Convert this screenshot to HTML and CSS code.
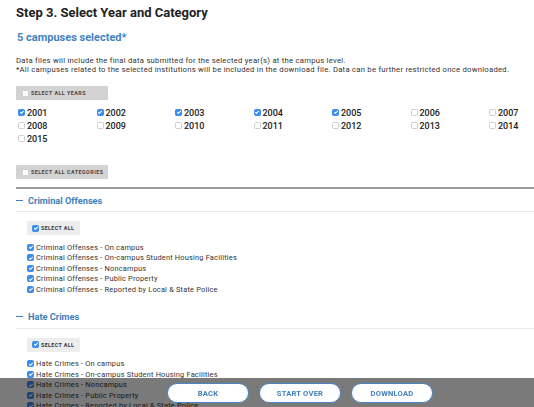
FILE: index.html
```html
<!DOCTYPE html>
<html>
<head>
<meta charset="utf-8">
<link rel="stylesheet" href="styles.css">
</head>
<body>
<div class="page">
  <h1 class="title">Step 3. Select Year and Category</h1>
  <h2 class="count">5 campuses selected*</h2>
  <p class="note">Data files will include the final data submitted for the selected year(s) at the campus level.<br>*All campuses related to the selected institutions will be included in the download file. Data can be further restricted once downloaded.</p>

  <div class="toggle-all"><span class="cb"></span><span>SELECT ALL YEARS</span></div>

  <div class="years">
    <label class="year"><span class="cb on"></span>2001</label>
    <label class="year"><span class="cb on"></span>2002</label>
    <label class="year"><span class="cb on"></span>2003</label>
    <label class="year"><span class="cb on"></span>2004</label>
    <label class="year"><span class="cb on"></span>2005</label>
    <label class="year"><span class="cb"></span>2006</label>
    <label class="year"><span class="cb"></span>2007</label>
    <label class="year"><span class="cb"></span>2008</label>
    <label class="year"><span class="cb"></span>2009</label>
    <label class="year"><span class="cb"></span>2010</label>
    <label class="year"><span class="cb"></span>2011</label>
    <label class="year"><span class="cb"></span>2012</label>
    <label class="year"><span class="cb"></span>2013</label>
    <label class="year"><span class="cb"></span>2014</label>
    <label class="year"><span class="cb"></span>2015</label>
  </div>

  <div class="toggle-all toggle-cats"><span class="cb"></span><span>SELECT ALL CATEGORIES</span></div>

  <div class="categories">
    <section class="cat">
      <div class="cat-head"><span class="dash"></span>Criminal Offenses</div>
      <div class="cat-body">
        <div class="sel-all"><span class="cb on"></span><span>SELECT ALL</span></div>
        <ul class="items">
          <li><span class="cb on"></span>Criminal Offenses - On campus</li>
          <li><span class="cb on"></span>Criminal Offenses - On-campus Student Housing Facilities</li>
          <li><span class="cb on"></span>Criminal Offenses - Noncampus</li>
          <li><span class="cb on"></span>Criminal Offenses - Public Property</li>
          <li><span class="cb on"></span>Criminal Offenses - Reported by Local &amp; State Police</li>
        </ul>
      </div>
    </section>
    <section class="cat">
      <div class="cat-head"><span class="dash"></span>Hate Crimes</div>
      <div class="cat-body">
        <div class="sel-all"><span class="cb on"></span><span>SELECT ALL</span></div>
        <ul class="items">
          <li><span class="cb on"></span>Hate Crimes - On campus</li>
          <li><span class="cb on"></span>Hate Crimes - On-campus Student Housing Facilities</li>
          <li><span class="cb on"></span>Hate Crimes - Noncampus</li>
          <li><span class="cb on"></span>Hate Crimes - Public Property</li>
          <li><span class="cb on"></span>Hate Crimes - Reported by Local &amp; State Police</li>
        </ul>
      </div>
    </section>
  </div>
</div>

<div class="action-bar">
  <button class="btn">BACK</button>
  <button class="btn">START OVER</button>
  <button class="btn">DOWNLOAD</button>
</div>
</body>
</html>
```

FILE: styles.css
```css
html, body {
  margin: 0;
  padding: 0;
  background: #fff;
  overflow: hidden;
}
body {
  font-family: Roboto, "Liberation Sans", sans-serif;
  color: #333;
}
.page {
  padding: 4px 0 0 16px;
}
.title {
  margin: 0;
  font-size: 13px;
  line-height: 17px;
  font-weight: 700;
  color: #222;
}
.count {
  margin: 10px 0 0 1px;
  font-size: 11px;
  line-height: 14px;
  font-weight: 700;
  color: #3f82c4;
}
.note {
  margin: 11px 0 0 0;
  font-size: 7.7px;
  line-height: 9px;
  letter-spacing: 0.25px;
  color: #333;
}
.toggle-all {
  margin-top: 12px;
  width: 92px;
  height: 14px;
  box-sizing: border-box;
  padding-left: 6px;
  background: #d3d3d3;
  display: flex;
  align-items: center;
  gap: 2px;
  font-size: 5.3px;
  font-weight: 700;
  letter-spacing: 0.5px;
  color: #444;
}
.toggle-cats {
  margin-top: 20px;
}
.cb {
  flex: none;
  display: inline-block;
  width: 7px;
  height: 7px;
  box-sizing: border-box;
  border: 1px solid #cfcfcf;
  border-radius: 1.5px;
  background: #fff;
  position: relative;
}
.cb.on {
  background: #3d8def;
  border-color: #3d8def;
}
.cb.on::after {
  content: "";
  position: absolute;
  left: 1.6px;
  top: 0.4px;
  width: 1.4px;
  height: 3px;
  border: solid #fff;
  border-width: 0 0.8px 0.8px 0;
  transform: rotate(45deg);
}
.years {
  margin-top: 6px;
  display: grid;
  grid-template-columns: repeat(6, 78.5px) auto;
}
.year {
  display: flex;
  align-items: center;
  gap: 2px;
  height: 13px;
  padding-left: 2px;
  font-size: 9px;
  font-weight: 500;
  color: #222;
}
.categories {
  margin-top: 8px;
  border-top: 2px solid #9a9a9a;
}
.cat-head {
  height: 23px;
  box-sizing: border-box;
  border-bottom: 1px solid #e9e9e9;
  display: flex;
  align-items: center;
  gap: 5px;
  font-size: 9.2px;
  font-weight: 700;
  color: #3f7fbd;
}
.dash {
  width: 7px;
  height: 1px;
  background: #3f7fbd;
}
.cat-body {
  padding: 9px 0 11px 11px;
}
.sel-all {
  width: 53px;
  height: 14px;
  box-sizing: border-box;
  padding-left: 5px;
  background: #ededed;
  display: flex;
  align-items: center;
  gap: 2px;
  font-size: 5.3px;
  font-weight: 700;
  letter-spacing: 0.4px;
  color: #333;
}
.items {
  list-style: none;
  margin: 7px 0 0 0;
  padding: 0;
}
.items li {
  display: flex;
  align-items: center;
  gap: 2px;
  height: 10.5px;
  font-size: 7.4px;
  letter-spacing: 0.2px;
  color: #333;
}
.action-bar {
  position: fixed;
  left: 0;
  right: 0;
  bottom: 0;
  height: 29px;
  box-sizing: border-box;
  padding: 5px 0 0 167px;
  background: rgba(0, 0, 0, 0.52);
  display: flex;
  align-items: flex-start;
  gap: 10px;
}
.btn {
  width: 82px;
  height: 20px;
  margin: 0;
  padding: 0;
  border: 1px solid #4a86c5;
  border-radius: 10px;
  background: #fff;
  font-family: Roboto, "Liberation Sans", sans-serif;
  font-size: 7.6px;
  font-weight: 700;
  letter-spacing: 0.2px;
  color: #3f7fbd;
}
```
